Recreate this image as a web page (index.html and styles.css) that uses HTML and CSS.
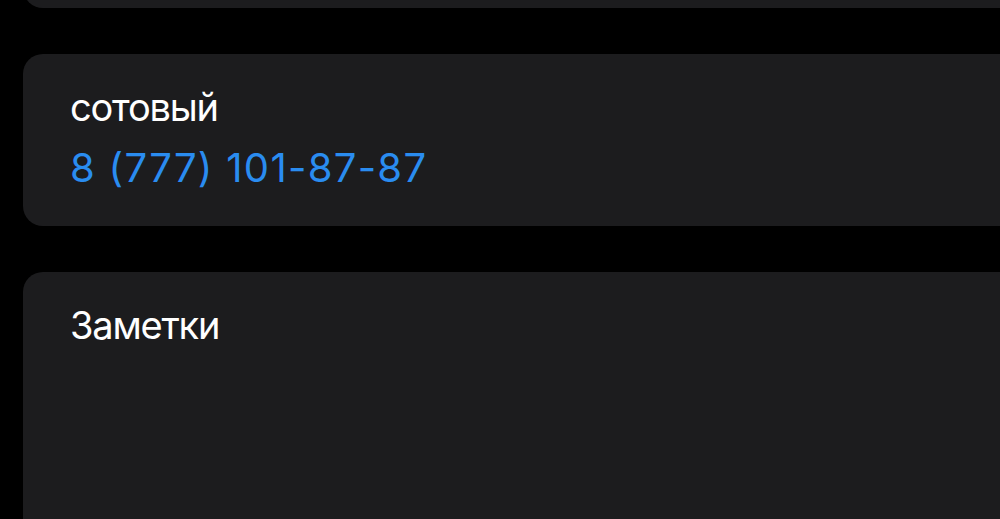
FILE: index.html
```html
<!DOCTYPE html>
<html lang="ru">
<head>
<meta charset="utf-8">
<link rel="stylesheet" href="styles.css">
</head>
<body>
<div class="page">
  <div class="card card-top"></div>
  <div class="card card-phone">
    <div class="label">сотовый</div>
    <div class="phone">8 (777) 101-87-87</div>
  </div>
  <div class="card card-notes">
    <div class="label">Заметки</div>
  </div>
</div>
</body>
</html>
```

FILE: styles.css
```css
html, body {
  margin: 0;
  padding: 0;
  background: #000;
  height: 100%;
  overflow: hidden;
}
.page {
  padding-left: 23px;
  margin-right: -40px;
  display: flex;
  flex-direction: column;
  gap: 46px;
  font-family: Inter, "Noto Sans", sans-serif;
  -webkit-font-smoothing: antialiased;
}
.card {
  background: #1c1c1e;
  border-radius: 20px;
  box-sizing: border-box;
  padding: 0 47px;
}
.card-top {
  height: 100px;
  margin-top: -92px;
}
.card-phone {
  height: 172px;
  padding-top: 30px;
}
.card-notes {
  height: 400px;
  padding-top: 30px;
}
.label {
  color: #fff;
  font-size: 38px;
  line-height: 46px;
  letter-spacing: -1.2px;
}
.phone {
  color: #2a8cf0;
  font-size: 40px;
  line-height: 46px;
  letter-spacing: 1.3px;
  margin-top: 15px;
}
```
